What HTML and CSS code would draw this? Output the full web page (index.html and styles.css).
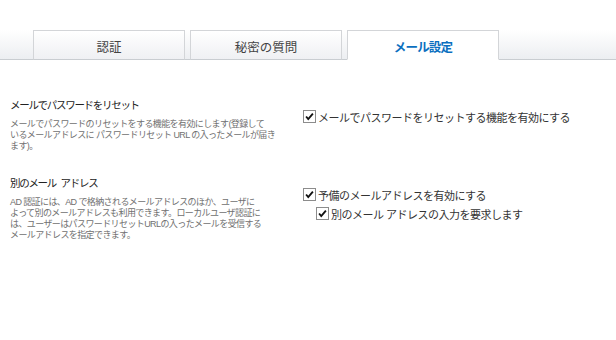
FILE: index.html
```html
<!DOCTYPE html>
<html lang="ja">
<head>
<meta charset="utf-8">
<link rel="stylesheet" href="styles.css">
</head>
<body>
<div class="header">
  <div class="tabs">
    <div class="tab">認証</div>
    <div class="tab">秘密の質問</div>
    <div class="tab active">メール設定</div>
  </div>
</div>
<div class="content">
  <div class="row">
    <div class="info">
      <h3 class="title">メールでパスワードをリセット</h3>
      <p class="desc">メールでパスワードのリセットをする機能を有効にします(登録して<br>いるメールアドレスに パスワードリセット URL の入ったメールが届き<br>ます)。</p>
    </div>
    <div class="opts">
      <div class="opt"><span class="cb"><svg viewBox="0 0 13 13" width="13" height="13"><path d="M2.5 6.5 L5 9.5 L10.5 3" fill="none" stroke="#111" stroke-width="2.2"/></svg></span><span class="lbl">メールでパスワードをリセットする機能を有効にする</span></div>
    </div>
  </div>
  <div class="row row2">
    <div class="info">
      <h3 class="title">別のメール アドレス</h3>
      <p class="desc">AD 認証には、AD で格納されるメールアドレスのほか、ユーザに<br>よって別のメールアドレスも利用できます。ローカルユーザ認証に<br>は、ユーザーはパスワードリセットURLの入ったメールを受信する<br>メールアドレスを指定できます。</p>
    </div>
    <div class="opts">
      <div class="opt"><span class="cb"><svg viewBox="0 0 13 13" width="13" height="13"><path d="M2.5 6.5 L5 9.5 L10.5 3" fill="none" stroke="#111" stroke-width="2.2"/></svg></span><span class="lbl">予備のメールアドレスを有効にする</span></div>
      <div class="opt sub"><span class="cb"><svg viewBox="0 0 13 13" width="13" height="13"><path d="M2.5 6.5 L5 9.5 L10.5 3" fill="none" stroke="#111" stroke-width="2.2"/></svg></span><span class="lbl">別のメール アドレスの入力を要求します</span></div>
    </div>
  </div>
</div>
</body>
</html>
```
FILE: styles.css
```css
html, body {
  margin: 0;
  padding: 0;
  background: #fff;
}
body {
  font-family: "Liberation Sans", "Noto Sans CJK JP", sans-serif;
  color: #333;
  width: 616px;
  height: 340px;
  overflow: hidden;
}
.header {
  height: 59px;
  border-bottom: 1px solid #c9cdd1;
  background: linear-gradient(to bottom, #ffffff 0px, #ffffff 30px, #eceef1 59px);
  display: flex;
  align-items: flex-end;
  padding-left: 33px;
  box-sizing: content-box;
}
.tabs {
  display: flex;
  gap: 5px;
  margin-bottom: -1px;
}
.tab {
  width: 150px;
  height: 25px;
  border: 1px solid #d3d5d8;
  border-bottom: 1px solid #c9cdd1;
  background: linear-gradient(to bottom, #ffffff, #eff0f3);
  display: flex;
  align-items: center;
  justify-content: center;
  font-size: 12.5px;
  color: #444;
  padding-top: 3px;
  box-sizing: content-box;
}
.tab.active {
  background: #fff;
  border-bottom-color: #fff;
  color: #0b6fbf;
  font-weight: bold;
  letter-spacing: -0.8px;
}
.content {
  padding-top: 38px;
}
.row {
  display: flex;
}
.row2 {
  margin-top: 24px;
}
.info {
  width: 303px;
  padding-left: 10px;
  box-sizing: border-box;
}
.title {
  margin: 0;
  font-size: 10.5px;
  font-weight: normal;
  line-height: 14px;
  color: #222;
  letter-spacing: -1.3px;
  word-spacing: 3px;
  white-space: nowrap;
}
.desc {
  margin: 7px 0 0;
  font-size: 9px;
  line-height: 11px;
  color: #707070;
  letter-spacing: -0.6px;
  white-space: nowrap;
}
.opts {
  padding-top: 10px;
  display: flex;
  flex-direction: column;
  gap: 2px;
}
.opt {
  display: flex;
  align-items: center;
  height: 17px;
}
.opt.sub {
  padding-left: 13px;
}
.cb {
  width: 11px;
  height: 11px;
  border: 1px solid #8c8c8c;
  background: #fff;
  display: flex;
  align-items: center;
  justify-content: center;
  margin-right: 2px;
}
.cb svg {
  width: 11px;
  height: 11px;
}
.lbl {
  font-size: 11px;
  letter-spacing: -0.5px;
  color: #333;
  white-space: nowrap;
}
```
